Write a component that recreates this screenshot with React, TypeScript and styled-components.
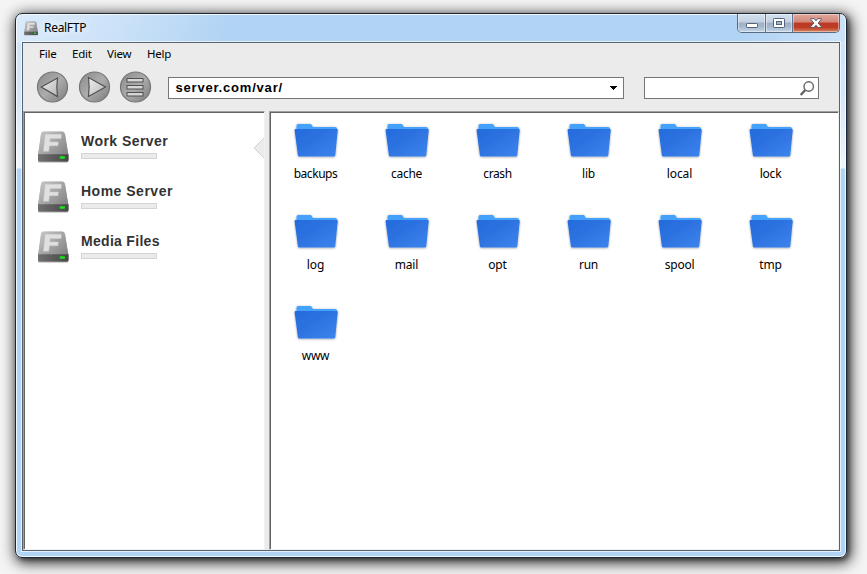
import React from 'react';
import styled, { createGlobalStyle } from 'styled-components';

const ui = '"Noto Sans", "Open Sans", sans-serif';
const bold = '"Liberation Sans", Arial, sans-serif';

const GlobalStyle = createGlobalStyle`
  * { box-sizing: border-box; }
  html, body { margin: 0; background: #f4f4f4; overflow: hidden; }
`;

const Desktop = styled.main`
  width: 867px;
  height: 574px;
  padding: 13px 0 0 15px;
  background: #f4f4f4;
  font: 12px/16px ${ui};
  color: #000;
`;

const Window = styled.section`
  width: 832px;
  height: 545px;
  display: flex;
  flex-direction: column;
  padding: 0 6px 6px;
  border: 1px solid #1d2735;
  border-radius: 7px;
  background:
    linear-gradient(115deg, rgba(228,240,252,.8) 0, rgba(220,235,250,.65) 90px, rgba(220,235,250,0) 200px, rgba(220,235,250,0) 670px, rgba(220,235,250,.65) 760px) 0 0 / 100% 29px no-repeat,
    linear-gradient(#b1d3f4, #b1d3f4 28px, #cfe3f9 29px, #d4e6fa 85px, #f0f6fd 154px, #b1d3f4 155px);
  box-shadow: inset 0 0 0 1px rgba(255,255,255,.8), 2px 2px 4px rgba(0,0,0,.4), 2px 3px 14px 2px rgba(0,0,0,.8);
`;

const TitleBar = styled.header`
  height: 28px;
  flex: none;
  display: flex;
  align-items: flex-start;
  padding-left: 1px;
`;

const AppIcon = styled.span`
  display: flex;
  margin-top: 6px;
`;

const Title = styled.span`
  margin: 6px 0 0 5px;
  flex: 1;
  letter-spacing: -0.3px;
  text-shadow: 0 0 8px #fff, 0 0 12px #fff;
`;

const Controls = styled.div`
  display: flex;
  height: 19px;
  width: 103px;
  border: 1px solid #5a6b80;
  border-top: 0;
  border-radius: 0 0 5px 5px;
  overflow: hidden;
`;

const Control = styled.button<{ $w: number; $danger?: boolean }>`
  width: ${p => p.$w}px;
  height: 18px;
  display: flex;
  align-items: center;
  justify-content: center;
  padding: 0;
  border: 0;
  border-right: ${p => (p.$danger ? '0' : '1px solid #64758c')};
  box-shadow: inset 0 0 0 1px rgba(255,255,255,.42);
  background: ${p => p.$danger
    ? 'linear-gradient(#e3a99d 0, #d0877a 45%, #bf3722 50%, #bd3e26 75%, #d98760 100%)'
    : 'linear-gradient(#d3e1ef 0, #c2d0e0 45%, #9db0c6 50%, #a4b7cc 70%, #c4d7ea 100%)'};
`;

const Client = styled.div`
  flex: 1;
  min-height: 0;
  width: 818px;
  display: flex;
  flex-direction: column;
  border: 1px solid #586371;
  background: #ebebeb;
  box-shadow: 0 0 0 1px rgba(255,255,255,.65);
`;

const Menu = styled.nav`
  height: 24px;
  flex: none;
  display: flex;
  padding: 3px 0 0 16px;
`;

const MenuItem = styled.span<{ $w: number }>`
  width: ${p => p.$w}px;
  font-size: 11.5px;
  letter-spacing: -0.2px;
`;

const Toolbar = styled.div`
  height: 44px;
  flex: none;
  display: flex;
  padding-left: 13px;
`;

const RoundButton = styled.button`
  width: 34px;
  height: 34px;
  margin: 3px 7.5px 0 0;
  padding: 0;
  border: 0;
  background: none;
  & svg { display: block; }
`;

const Field = styled.div<{ $w: number; $ml: number; $pr?: number }>`
  width: ${p => p.$w}px;
  height: 22px;
  margin: 10px 0 0 ${p => p.$ml}px;
  display: flex;
  align-items: center;
  justify-content: space-between;
  padding: 0 ${p => p.$pr ?? 5}px 0 7px;
  border: 1px solid #767676;
  background: #fff;
  font: bold 13px/18px ${bold};
  letter-spacing: .8px;
`;

const Panes = styled.div`
  flex: 1;
  min-height: 0;
  display: flex;
  gap: 4px;
`;

const Pane = styled.div`
  border: 1px solid #f1f1ef;
  border-top-color: #a0a0a0;
  border-left-color: #a0a0a0;
  background: #fff;
  box-shadow: inset 1px 1px 0 #646464;
`;

const Sidebar = styled(Pane)`
  width: 242px;
  padding-top: 12px;
`;

const Files = styled(Pane)`
  flex: 1;
  display: grid;
  grid-template-columns: repeat(6, 91px);
  grid-auto-rows: 91px;
  padding-top: 1px;
`;

const Server = styled.div`
  height: 50px;
  display: flex;
`;

const DriveSlot = styled.span`
  width: 45px;
  margin: 4px 0 0 11px;
`;

const ServerInfo = styled.div`
  flex: 1;
  padding: 7px 0 0 1px;
`;

const ServerName = styled.div<{ $ls: number }>`
  font: bold 14px/20px ${bold};
  letter-spacing: ${p => p.$ls}px;
  color: #333;
`;

const Meter = styled.div`
  width: 76px;
  height: 6px;
  margin-top: 2px;
  border: 1px solid #d4d4d4;
  background: #ebebeb;
`;

const Pointer = styled.span`
  margin: 14px 0 0 0;
  width: 11px;
  height: 20px;
`;

const FileItem = styled.div`
  display: flex;
  flex-direction: column;
  align-items: center;
  padding-top: 8px;
  & svg { flex: none; }
`;

const FileName = styled.span<{ $ls: number }>`
  margin-top: 5px;
  letter-spacing: ${p => p.$ls}px;
`;

function Drive({ size, uid }: { size: number; uid: string }) {
  return (
    <svg width={size} height={size} viewBox="0 0 36 36" display="block">
      <defs>
        <linearGradient id={uid + 'a'} x1="0" y1="0" x2="1" y2="1">
          <stop offset="0" stopColor="#c8c8c8" /><stop offset=".5" stopColor="#a0a0a1" /><stop offset="1" stopColor="#77777a" />
        </linearGradient>
        <linearGradient id={uid + 'b'} x1="0" y1="0" x2="1" y2="0">
          <stop offset="0" stopColor="#707070" /><stop offset="1" stopColor="#484848" />
        </linearGradient>
        <filter id={uid + 's'} x="-15%" y="-15%" width="130%" height="130%">
          <feDropShadow dx="0" dy=".5" stdDeviation=".7" floodOpacity=".45" />
        </filter>
      </defs>
      <g filter={`url(#${uid}s)`}>
        <path d="M8.5 3.500h18.500q2.300 0 3 2.400L33 24.500q.4 1.400.4 2.200v5.300q0 1.600-1.600 1.600H4.600Q3 33.600 3 32v-5.300q0-.8.4-2.200L6 5.900q.5-2.400 2.500-2.400z" fill={`url(#${uid}a)`} />
        <path d="M3 26.300h30.400V32q0 1.600-1.600 1.600H4.600Q3 33.600 3 32z" fill={`url(#${uid}b)`} />
      </g>
      <path d="M10.300 6.300h16l-.2 4.300H15.100l-.4 3.400h8.600l-.4 3.700h-8.500l-.7 5.600H8.400z" fill="#e0e0e0" stroke="#cdcdcd" strokeWidth=".5" />
      <rect x="24.600" y="28.200" width="5.400" height="2.600" rx="1" fill="#19e51b" />
    </svg>
  );
}

function Folder() {
  return (
    <svg width="48" height="40" viewBox="0 0 48 40">
      <defs>
        <linearGradient id="folder" x1="0" y1="0" x2="1" y2="1">
          <stop offset="0" stopColor="#246bdc" /><stop offset=".4" stopColor="#2c71e0" /><stop offset="1" stopColor="#3d84ee" />
        </linearGradient>
        <filter id="folderShadow" x="-15%" y="-15%" width="130%" height="140%">
          <feDropShadow dx="0" dy=".5" stdDeviation="1.300" floodOpacity=".4" />
        </filter>
      </defs>
      <g filter="url(#folderShadow)">
        <path d="M4.500 10V4.600Q4.500 3 6 3h13l2 3h22q2 0 2.200 2v4H4.500z" fill="#45a2fc" />
        <path d="M3.800 8h40.700q1.300 0 1.200 1.300l-2.400 24.900q-.1 1.300-1.400 1.300H7.300q-1.300 0-1.400-1.300L2.600 9.300Q2.500 8 3.800 8z" fill="url(#folder)" />
      </g>
    </svg>
  );
}

function Round({ kind }: { kind: 'back' | 'forward' | 'list' }) {
  const id = 'round-' + kind;
  return (
    <RoundButton aria-label={kind}>
      <svg width="34" height="34" viewBox="0 0 34 34">
        <defs>
          <linearGradient id={id} x1="0" y1="0" x2="1" y2="1">
            <stop offset=".1" stopColor="#8f8f8f" /><stop offset=".5" stopColor="#acacac" /><stop offset=".95" stopColor="#808080" />
          </linearGradient>
          <linearGradient id={id + 'g'} x1="0" y1="0" x2="1" y2="1">
            <stop offset="0" stopColor="#f0f0f0" /><stop offset="1" stopColor="#b5b5b5" />
          </linearGradient>
        </defs>
        <circle cx="16.500" cy="17" r="15" fill={`url(#${id})`} stroke="#747474" strokeWidth="1.200" />
        <g fill={`url(#${id}g)`} stroke="#505050" strokeWidth="1.200">
          {kind === 'back' && <path d="M5.300 17 21.500 8Q20.200 17 21.500 26.500z" />}
          {kind === 'forward' && <path d="M10.500 7.500Q11.800 17 10.500 26.500L27.500 17z" />}
          {kind === 'list' && [8.500, 15.500, 22.500].map(y => <rect key={y} x="8" y={y} width="16" height="3.500" fill="#d6d6d6" strokeWidth="1" />)}
        </g>
      </svg>
    </RoundButton>
  );
}

const servers: [string, number][] = [['Work Server', 0.45], ['Home Server', 0.5], ['Media Files', 0.3]];
const files: [string, number][] = [
  ['backups', -0.45], ['cache', -0.3], ['crash', -0.4], ['lib', -0.2], ['local', -0.1], ['lock', -0.2],
  ['log', -0.1], ['mail', -0.2], ['opt', -0.2], ['run', -0.3], ['spool', -0.25], ['tmp', -0.1], ['www', -0.3],
];

export default function App() {
  return (
    <>
      <GlobalStyle />
      <Desktop>
        <Window>
          <TitleBar>
            <AppIcon><Drive size={16} uid="title" /></AppIcon>
            <Title>RealFTP</Title>
            <Controls>
              <Control $w={28} aria-label="Minimize">
                <svg width="14" height="12" viewBox="0 0 14 12"><rect x="1.500" y="6.500" width="11" height="4" rx=".7" fill="#fff" stroke="#57637a" /></svg>
              </Control>
              <Control $w={27} aria-label="Maximize">
                <svg width="12" height="10" viewBox="0 0 12 10"><rect x=".5" y=".5" width="11" height="9" rx=".7" fill="#fff" stroke="#57637a" /><rect x="3.500" y="3.500" width="5" height="3" fill="#a5b6cb" stroke="#57637a" /></svg>
              </Control>
              <Control $w={46} $danger aria-label="Close">
                <svg width="12" height="10" viewBox="0 0 12 10"><path d="M.7.6h3.500L6 2.800 7.800.6h3.500v.7L8.200 5l3.100 3.700v.7H7.800L6 7.200 4.200 9.400H.7v-.7L3.800 5 .7 1.300z" fill="#fff" stroke="#59596a" /></svg>
              </Control>
            </Controls>
          </TitleBar>
          <Client>
            <Menu>
              <MenuItem $w={33}>File</MenuItem><MenuItem $w={35}>Edit</MenuItem>
              <MenuItem $w={40}>View</MenuItem><MenuItem $w={40}>Help</MenuItem>
            </Menu>
            <Toolbar>
              <Round kind="back" /><Round kind="forward" /><Round kind="list" />
              <Field $w={456} $ml={7}>
                server.com/var/
                <svg width="9" height="6" viewBox="0 0 9 6" shapeRendering="crispEdges"><path d="M1 1h7v1H1zM2 2h5v1H2zM3 3h3v1H3zM4 4h1v1H4z" fill="#000" /></svg>
              </Field>
              <Field $w={175} $ml={20} $pr={3}>
                <span />
                <svg width="16" height="17" viewBox="0 0 16 17" fill="none" stroke="#636363"><circle cx="9.700" cy="6.500" r="4.700" strokeWidth="1.400" /><path d="m6.300 10-4.600 5" strokeWidth="2.400" /></svg>
              </Field>
            </Toolbar>
            <Panes>
              <Sidebar>
                {servers.map(([name, ls], i) => (
                  <Server key={name}>
                    <DriveSlot><Drive size={36} uid={'drive' + i} /></DriveSlot>
                    <ServerInfo><ServerName $ls={ls}>{name}</ServerName><Meter /></ServerInfo>
                    {i === 0 && <Pointer><svg width="11" height="20" viewBox="0 0 11 20"><path d="M11 0 1 10l10 10" fill="#ebebeb" stroke="#d2d2d2" /></svg></Pointer>}
                  </Server>
                ))}
              </Sidebar>
              <Files>
                {files.map(([name, ls]) => <FileItem key={name}><Folder /><FileName $ls={ls}>{name}</FileName></FileItem>)}
              </Files>
            </Panes>
          </Client>
        </Window>
      </Desktop>
    </>
  );
}
